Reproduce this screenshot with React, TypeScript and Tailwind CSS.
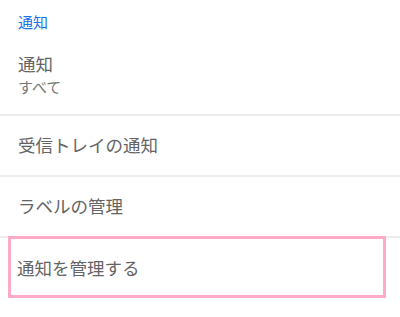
const rows = ["受信トレイの通知", "ラベルの管理"];

export default function App() {
  return (
    <div
      className="w-[400px] h-[317px] bg-white overflow-hidden"
      style={{ fontFamily: '"Noto Sans CJK JP", "Noto Sans", sans-serif' }}
    >
      {/* Section header */}
      <div className="h-[44px] flex items-center px-[18px] text-[15px] text-[#1a73e8]">通知</div>

      {/* Notifications item */}
      <div className="px-[18px] pt-[8px] pb-[16px] text-[#646464]">
        <div className="text-[17.5px] leading-[23px]">通知</div>
        <div className="text-[15px] leading-[23px] text-[#777777]">すべて</div>
      </div>

      {rows.map((label) => (
        <div key={label} className="border-t-2 border-[#ececec] h-[61px] flex items-center px-[18px] text-[17.5px] text-[#646464]">
          {label}
        </div>
      ))}

      <div className="relative border-t-2 border-[#ececec] h-[62px] flex items-center px-[17px] text-[17.5px] text-[#646464]">
        通知を管理する
        {/* highlight outline */}
        <div className="absolute left-[8px] top-[-2px] w-[378px] h-[62px] border-[3px] border-[#ffaac8] pointer-events-none" />
      </div>
    </div>
  );
}
